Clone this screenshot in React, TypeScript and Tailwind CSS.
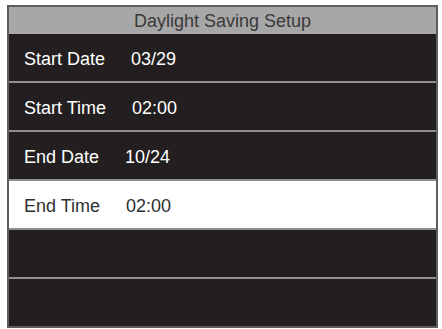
import React from 'react';

interface Row {
  label: string;
  value: string;
  selected?: boolean;
}

const rows: Row[] = [
  { label: 'Start Date', value: '03/29' },
  { label: 'Start Time', value: '02:00' },
  { label: 'End Date', value: '10/24' },
  { label: 'End Time', value: '02:00', selected: true },
  { label: '', value: '' },
  { label: '', value: '' },
];

export default function App() {
  return (
    <div
      className="w-[442px] h-[329px] bg-white pt-[5px] pl-[7px]"
      style={{ fontFamily: '"Liberation Sans", Arial, sans-serif' }}
    >
      <div className="w-[431px] h-[323px] border-2 border-[#5e5e5e] flex flex-col bg-[#231f20]">
        {/* Cabeçalho */}
        <div className="h-[27px] shrink-0 bg-[#a7a7a7] flex items-center justify-center text-[18px] text-[#3a3a3a] leading-none">
          Daylight Saving Setup
        </div>

        {rows.map((row, i) => (
          <div
            key={i}
            className={`flex-1 flex items-center pl-[15px] pt-[2px] text-[18px] leading-none ${
              i > 0 ? 'border-t-2 border-[#8f8f8f]' : ''
            } ${row.selected ? 'bg-white text-[#2f2f2f]' : 'bg-[#231f20] text-white'}`}
          >
            {row.label && (
              <>
                <span>{row.label}</span>
                <span className="ml-[26px]">{row.value}</span>
              </>
            )}
          </div>
        ))}
      </div>
    </div>
  );
}
